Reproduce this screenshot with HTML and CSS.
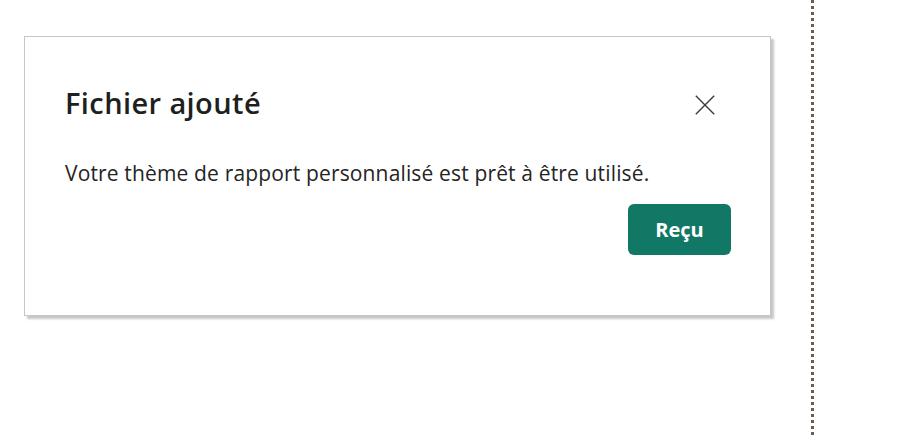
FILE: index.html
```html
<!DOCTYPE html>
<html lang="fr">
<head>
<meta charset="utf-8">
<title>Fichier ajouté</title>
<link rel="stylesheet" href="styles.css">
</head>
<body>
<div class="page">
  <div class="stage">
    <div class="dialog" role="dialog">
      <div class="dialog-header">
        <h2 class="dialog-title">Fichier ajouté</h2>
        <button class="close-btn" aria-label="Fermer">
          <svg width="20" height="20" viewBox="0 0 20 20"><path d="M0.8 0.8 L19.2 19.2 M19.2 0.8 L0.8 19.2" stroke="#3b3b3b" stroke-width="1.4" fill="none"/></svg>
        </button>
      </div>
      <p class="dialog-text">Votre thème de rapport personnalisé est prêt à être utilisé.</p>
      <div class="dialog-footer">
        <button class="primary-btn">Reçu</button>
      </div>
    </div>
  </div>
  <div class="divider"></div>
</div>
</body>
</html>
```
FILE: styles.css
```css
html, body {
  margin: 0;
  padding: 0;
  background: #ffffff;
}
body {
  font-family: "Open Sans", "Noto Sans", "Liberation Sans", sans-serif;
  color: #252423;
}
.page {
  display: flex;
  height: 436px;
  overflow: hidden;
}
.stage {
  width: 811px;
  padding: 36px 0 0 24px;
  box-sizing: border-box;
}
.dialog {
  width: 747px;
  height: 280px;
  box-sizing: border-box;
  border: 1px solid #c8c6c4;
  background: #fff;
  box-shadow: 3px 3px 2px rgba(0,0,0,0.22);
  padding: 48px 39px 0 40px;
}
.dialog-header {
  display: flex;
  align-items: center;
  justify-content: space-between;
}
.dialog-title {
  margin: 0;
  font-size: 29px;
  font-weight: 600;
  letter-spacing: 0.4px;
  line-height: 36px;
  color: #201f1e;
}
.close-btn {
  border: 0;
  background: none;
  padding: 0;
  margin-right: 16px;
  margin-top: 3px;
  width: 20px;
  height: 20px;
  display: flex;
}
.dialog-text {
  margin: 38px 0 0 0;
  font-size: 21px;
  letter-spacing: 0.15px;
  line-height: 28px;
  color: #252423;
}
.dialog-footer {
  display: flex;
  justify-content: flex-end;
  margin-top: 17px;
}
.primary-btn {
  width: 103px;
  height: 51px;
  border: 0;
  border-radius: 6px;
  background: #117865;
  color: #fff;
  font-family: inherit;
  font-size: 20px;
  font-weight: 700;
}
.divider {
  width: 3px;
  height: 436px;
  background: repeating-linear-gradient(to bottom, #6b5b50 0 3px, transparent 3px 6px);
}
```
